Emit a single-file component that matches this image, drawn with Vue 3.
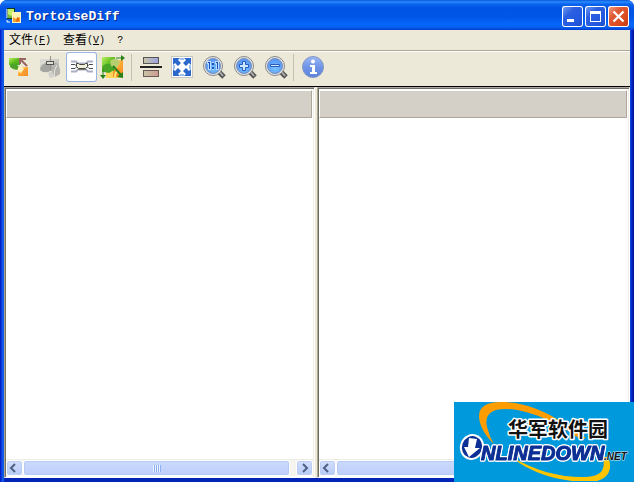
<script setup>
const zooms = [
  { id: 'actual', label: 'Original size' },
  { id: 'in', label: 'Zoom in' },
  { id: 'out', label: 'Zoom out' }
]
const panes = ['left', 'right']
</script>

<template>
  <div class="window">
    <header class="titlebar">
      <svg class="app-icon" width="16" height="16" viewBox="0 0 16 16" aria-hidden="true">
        <rect x="1.5" y=".5" width="7" height="10" fill="#79b83c" stroke="#153c18" />
        <path d="M2 1h6v4L5 8 2 6z" fill="#c2ed69" />
        <path d="M1 1v9M1 12v2h3" fill="none" stroke="#fff" />
        <rect x="6.500" y="4.500" width="8" height="10" fill="#f6a02c" stroke="#fff5bd" />
        <path d="M7 5h7v4l-4 2-3-2z" fill="#fff1b2" />
        <path d="M11 9l2 1v3l-3 1z" fill="#e46b12" />
      </svg>
      <h1>TortoiseDiff</h1>
      <div class="controls">
        <button class="win" aria-label="Minimize"><svg width="21" height="21"><path d="M5 13h7v3H5z" fill="#fff" /></svg></button>
        <button class="win" aria-label="Maximize"><svg width="21" height="21"><path d="M5 5h11v11H5zM6 8v7h9V8z" fill="#fff" fill-rule="evenodd" /></svg></button>
        <button class="win close" aria-label="Close"><svg width="21" height="21"><path d="M5.500 5.500l10 10m0-10l-10 10" stroke="#fff" stroke-width="2.300" /></svg></button>
      </div>
    </header>

    <div class="body">
      <nav class="menubar">
        <button>文件<span class="key">(<u>F</u>)</span></button>
        <button>查看<span class="key">(<u>V</u>)</span></button>
        <button><span class="key">?</span></button>
      </nav>

      <div class="toolbar">
        <svg class="defs" width="0" height="0" aria-hidden="true">
          <defs>
            <linearGradient id="green" x2="1" y2="1"><stop stop-color="#b9ef62" /><stop offset=".5" stop-color="#61bd1d" /><stop offset="1" stop-color="#3fa51c" /></linearGradient>
            <linearGradient id="orange" x2="1" y2="1"><stop stop-color="#fff0a0" /><stop offset=".5" stop-color="#ffa52e" /><stop offset="1" stop-color="#f58a20" /></linearGradient>
            <linearGradient id="gray" x2="1" y2="1"><stop stop-color="#dddcd5" /><stop offset="1" stop-color="#bcbbb6" /></linearGradient>
            <linearGradient id="cool"><stop stop-color="#c8c6a8" /><stop offset="1" stop-color="#9ba2e2" /></linearGradient>
            <linearGradient id="warm"><stop stop-color="#c9c6a8" /><stop offset="1" stop-color="#cf9a91" /></linearGradient>
            <radialGradient id="lens" cy=".65"><stop stop-color="#79c4ff" /><stop offset="1" stop-color="#5c9bf5" /></radialGradient>
            <linearGradient id="info" x2="0" y2="1"><stop stop-color="#9db9f5" /><stop offset=".5" stop-color="#6f94e7" /><stop offset="1" stop-color="#5b83dc" /></linearGradient>
          </defs>
        </svg>

        <button aria-label="Open images">
          <svg width="31" height="30" viewBox="0 0 31 30">
            <rect x="5" y="6" width="11" height="7" fill="url(#green)" />
            <path d="M6 13q4-3 7 0l2 2-2 3-4-1-3-2z" fill="#4fa32b" />
            <rect x="14" y="15" width="10" height="9" fill="url(#orange)" />
            <path d="M14 16q4-3 6 1l-3 4-3-2z" fill="#fff1b8" />
            <path d="M19 22q-1-5 3-5 2 4-2 6" fill="#f79a38" />
            <path d="M23 14l-6-6M16 12V7h6" fill="none" stroke="#98665f" stroke-width="2" />
          </svg>
        </button>
        <button aria-label="Blend images" disabled>
          <svg width="31" height="30" viewBox="0 0 31 30">
            <path d="M5 7h19v12H5z" fill="url(#gray)" />
            <path d="M5 17q2-6 7-6 5 1 6 5-4 5-7 4-4 1-6-3z" fill="#a5a5a2" />
            <path d="M17 21q-1-8 4-11 5 5 4 12l-5 3z" fill="#b4b3ae" />
            <path d="M13 21l4-2 2 6-4 1z" fill="#d1d0cb" />
            <path d="M19 25q0-8 3-12M6 12q3-4 8-3" fill="none" stroke="#e8e6dd" />
            <path d="M15.500 4v15" stroke="#96958f" />
            <rect x="11.500" y="9.500" width="7" height="3" fill="#dddcd5" stroke="#555" />
          </svg>
        </button>
        <button class="pressed" aria-label="Link images together" aria-pressed="true">
          <svg width="31" height="30" viewBox="0 0 31 30">
            <path d="M5 9.500h5l2 2h8l2-2h5M5 19.500h5l2-2h8l2 2h5" fill="none" stroke="#aab0c8" stroke-width="2" />
            <path d="M5 12.500h4l2 2-2 2H5M27 12.500h-4l-2 2 2 2h4" fill="none" stroke="#4d4e55" />
            <path d="M10.500 11.500h2l1 1h5l1-1h2v3l-2 2h-7l-2-2z" fill="#f1f0dc" stroke="#44453f" />
            <path d="M12 17.500h8" stroke="#77776a" />
          </svg>
        </button>
        <button aria-label="Fit image sizes">
          <svg width="31" height="30" viewBox="0 0 31 30">
            <rect x="5" y="5" width="13" height="15" fill="url(#green)" />
            <rect x="17" y="8" width="9" height="17" fill="url(#orange)" />
            <rect x="9" y="19" width="14" height="7" fill="#ffd65c" />
            <path d="M5 15q5-6 11-1l1 4-5 3-5-1z" fill="#48a626" />
            <path d="M13 9q6-5 10 1l-4 7-5-3z" fill="#b4ce70" />
            <path d="M16 25q-1-8 5-9 5 3 2 9z" fill="#f98b21" />
            <path d="M18 25q0-5 3-6" fill="none" stroke="#ffe77c" stroke-width="2" />
            <path d="M19 6h7M6 17v8" fill="none" stroke="#278116" />
            <path d="M24 3l4 3-4 3zM3 23h6l-3 4zM26 26v-6l-6 5z" fill="#278116" />
            <path d="M16 14l8 9" stroke="#278116" stroke-width="2" />
          </svg>
        </button>
        <i class="separator"></i>
        <button aria-label="Arrange vertically">
          <svg width="31" height="30" viewBox="0 0 31 30">
            <rect x="8.500" y="5.500" width="15" height="6" fill="url(#cool)" stroke="#555" />
            <path d="M5 14h22v2H5z" fill="#222" />
            <rect x="8.500" y="18.500" width="15" height="6" fill="url(#warm)" stroke="#685856" />
          </svg>
        </button>
        <button aria-label="Fit to window">
          <svg width="31" height="30" viewBox="0 0 31 30">
            <rect x="5.500" y="4.500" width="21" height="21" fill="#fff" stroke="#c7c6c1" />
            <path d="M7 6h7l-2 2 3 3-3 3-3-3-2 2zM25 6h-7l2 2-3 3 3 3 3-3 2 2zM7 24h7l-2-2 3-3-3-3-3 3-2-2zM25 24h-7l2-2-3-3 3-3 3 3 2-2z" fill="#2c68cc" />
            <path d="M14 6h4v2h-4zM14 22h4v2h-4zM7 13h2v4H7zM23 13h2v4h-2z" fill="#9fc0ef" />
          </svg>
        </button>
        <button v-for="zoom in zooms" :key="zoom.id" :aria-label="zoom.label">
          <svg width="31" height="30" viewBox="0 0 31 30">
            <path d="M21 19l6 6" stroke="#555" stroke-width="5" />
            <path d="M22 19l4 5" stroke="#aaa" stroke-width="2" />
            <circle cx="16" cy="14" r="9.500" fill="#e6e7e5" stroke="#88888a" />
            <circle cx="16" cy="14" r="7.500" fill="url(#lens)" stroke="#7a8fb8" />
            <path v-if="zoom.id === 'actual'" d="M10 9h4v9h-3v-6h-1zM18 9h4v9h-3v-6h-1zM15 10h2v3h-2zM15 15h2v3h-2z" fill="#b9ddff" />
            <path v-if="zoom.id === 'actual'" d="M11 10h2v7h-1v-6h-1zM19 10h2v7h-1v-6h-1zM15 11h2v2h-2zM15 15h2v2h-2z" fill="#1d50bd" />
            <path v-if="zoom.id === 'in'" d="M14.500 9.500h3v3h3v3h-3v3h-3v-3h-3v-3h3z" fill="#c9e9ff" stroke="#2a59bf" />
            <path v-if="zoom.id === 'out'" d="M11.500 12.500h9v2h-9z" fill="#c9e9ff" stroke="#2a59bf" />
          </svg>
        </button>
        <i class="separator"></i>
        <button aria-label="Image information">
          <svg width="31" height="30" viewBox="0 0 31 30">
            <circle cx="16" cy="15" r="10.500" fill="url(#info)" stroke="#8296c4" />
            <circle cx="16" cy="9.500" r="2" fill="#fff" />
            <path d="M13 13h5v7h2v2h-7v-2h2v-5h-2z" fill="#fff" />
          </svg>
        </button>
      </div>

      <main class="panes">
        <section v-for="side in panes" :key="side" class="pane">
          <div class="caption"></div>
          <div class="canvas"></div>
          <div class="scrollbar">
            <button aria-label="Scroll left"><svg width="15" height="14"><path d="M8 3L4 7l4 4" /></svg></button>
            <div class="track"><div class="thumb"><i></i></div></div>
            <button aria-label="Scroll right"><svg width="15" height="14"><path d="M6 3l4 4-4 4" /></svg></button>
          </div>
        </section>
      </main>
    </div>

    <svg class="badge" width="180" height="80" viewBox="0 0 180 80">
      <rect width="180" height="80" fill="#0099dc" />
      <path fill="#ff9c00" d="M40 42C30 33 25 22 25 14C25 4 34 0 47 0C68 0 90 8 107 20L132 36L126 37C101 19 73 7 51 7C36 7 29 14 34 28Q36 36 40 42z" />
      <path fill="#ffc400" d="M57 54C81 70 111 76 132 75C146 74 152 69 149 55H154C159 66 155 76 143 79H118C94 76 70 67 57 54z" />
      <text class="logo-cn" x="54" y="35">华军软件园</text>
      <ellipse class="disc" cx="18" cy="45" rx="11" ry="12" transform="rotate(20 18 45)" />
      <path d="M15 36l8 1-2 9h5L15 55l-5-10h4z" fill="#fff" />
      <text class="logo-word" x="27" y="58">NLINEDOWN</text>
      <text class="logo-net" x="150" y="58">.NET</text>
    </svg>
  </div>
</template>

<style>
body {
  margin: 0;
  background: #fff;
}
</style>

<style scoped>
* {
  box-sizing: border-box;
}
.window {
  position: relative;
  display: flex;
  flex-direction: column;
  height: 100vh;
  overflow: hidden;
  border-radius: 7px 7px 0 0;
  background: linear-gradient(90deg, #0010b8 0, #0831d9 1px, #1660ed 3px, #0855dd 4px, #0855dd calc(100% - 4px), #0831d9 calc(100% - 3px), #001090 100%);
  font-family: "Liberation Mono", "Noto Sans CJK SC", monospace;
}
button {
  padding: 0;
  border: 0;
  background: none;
  color: #000;
  font: inherit;
}
svg {
  display: block;
}
.titlebar {
  display: flex;
  flex: none;
  align-items: center;
  height: 30px;
  padding: 2px 5px 0 6px;
  background: linear-gradient(#0a58d8 0, #2a8bff 2px, #0b65ee 4px, #0054e3 8px, #0056e7 17px, #0666fb 24px, #0563f3 27px, #003dd0 30px);
}
h1 {
  flex: 1;
  margin: 0 0 0 4px;
  padding-top: 2px;
  color: #fff;
  font-size: 13px;
  line-height: 16px;
  text-shadow: 1px 1px 0 #0a2383;
}
.controls {
  display: flex;
  gap: 2px;
}
.win {
  width: 21px;
  height: 21px;
  border-radius: 3px;
  background: linear-gradient(135deg, #7ba4f5, #2c5fe0 35%, #2359e0 70%, #1c49c4);
  box-shadow: inset 0 0 0 1px #fff;
}
.close {
  background: linear-gradient(135deg, #f0a78c, #e05a35 35%, #db4a20 70%, #b93712);
}
.body {
  display: flex;
  flex: 1;
  flex-direction: column;
  min-height: 0;
  margin: 0 4px;
  border-bottom: 4px solid #0024b8;
  background: #ece9d8;
}
.menubar {
  display: flex;
  flex: none;
  gap: 12px;
  height: 21px;
  padding: 1px 5px 0;
  border-bottom: 1px solid #aca899;
  font-size: 12px;
  line-height: 20px;
}
.menubar button {
  display: flex;
}
.key {
  font-size: 10px;
}
.toolbar {
  display: flex;
  flex: none;
  height: 35px;
  border-top: 1px solid #fff;
}
.toolbar button {
  width: 31px;
  height: 30px;
}
.toolbar .pressed {
  border-radius: 3px;
  background: #fff;
  box-shadow: inset 0 0 0 1px #98b5e2;
}
.separator {
  width: 1px;
  height: 27px;
  margin: 2px 3px;
  background: #c5c2b2;
}
.panes {
  display: grid;
  flex: 1;
  grid-template-columns: 311fr 313fr;
  gap: 2px;
  min-height: 0;
  border-top: 1px solid #000;
}
.pane {
  display: flex;
  flex-direction: column;
  min-width: 0;
  border: 1px solid;
  border-color: #aca899 #fff #fff #aca899;
  background: #fff;
  box-shadow: inset 1px 1px 0 #716f64, inset -1px 0 0 #f1efe2;
  padding: 2px 1px 1px;
}
.caption {
  flex: none;
  height: 28px;
  margin-right: 1px;
  border: 1px solid;
  border-color: #fff #aca899 #aca899 #fff;
  background: #d4d0c8;
}
.canvas {
  flex: 1;
}
.scrollbar {
  display: flex;
  flex: none;
  height: 17px;
  background: #f5f4ef;
  border-top: 1px solid #eeede5;
}
.scrollbar button {
  width: 17px;
  border: 1px solid #fff;
  border-radius: 3px;
  background: linear-gradient(#d3dffd, #b7caf7);
  box-shadow: inset 0 0 0 1px #bccdf6;
}
.scrollbar path {
  fill: none;
  stroke: #4d6185;
  stroke-width: 2px;
}
.track {
  flex: 1;
  padding-right: 6px;
}
.thumb {
  display: flex;
  align-items: center;
  justify-content: center;
  height: 16px;
  border: 1px solid #fff;
  border-radius: 3px;
  background: linear-gradient(#cbdafe, #bdcefa);
  box-shadow: inset 0 0 0 1px #b7caf5;
}
.thumb i {
  width: 8px;
  height: 7px;
  background: repeating-linear-gradient(90deg, #eef4fe 0, #eef4fe 1px, #8cb0f8 1px, #8cb0f8 2px);
}
.badge {
  position: absolute;
  right: 0;
  bottom: 0;
}
.badge text {
  paint-order: stroke;
  stroke-linejoin: round;
}
.logo-cn {
  fill: #111;
  stroke: #fff;
  stroke-width: 3px;
  font: bold 20px "Noto Sans CJK SC", sans-serif;
}
.logo-word {
  fill: #0b2f94;
  stroke: #0b2f94;
  stroke-width: 1px;
  font: italic bold 20px "Liberation Sans", sans-serif;
  filter: drop-shadow(1px 0 0 #fff) drop-shadow(-1px 0 0 #fff) drop-shadow(0 1px 0 #fff) drop-shadow(0 -1px 0 #fff);
}
.disc {
  fill: #0b2f94;
  stroke: #fff;
  stroke-width: 2px;
}
.logo-net {
  fill: #111;
  stroke: #d4eefa;
  stroke-width: 1px;
  font: italic bold 10px "Liberation Sans", sans-serif;
}
</style>
